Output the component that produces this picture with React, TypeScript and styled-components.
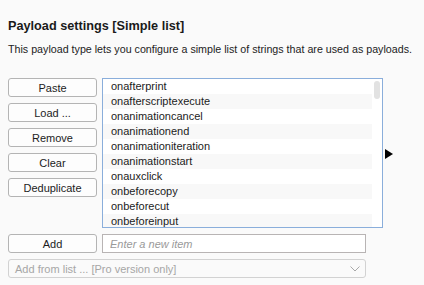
import React from 'react'
import styled, { createGlobalStyle } from 'styled-components'

const FONT = `"Liberation Sans", Arial, sans-serif`

const GlobalStyle = createGlobalStyle`
  html, body {
    margin: 0;
    padding: 0;
    background: #fafafa;
  }
  body {
    font-family: ${FONT};
    color: #1c1c1c;
  }
`

const Panel = styled.div`
  display: flex;
  flex-direction: column;
  padding: 17px 8px 0 8px;
  width: 424px;
  height: 285px;
  box-sizing: border-box;
`

const Title = styled.h2`
  margin: 0;
  font-size: 12.7px;
  font-weight: 700;
  line-height: 18px;
  color: #1a1a1a;
`

const Description = styled.p`
  margin: 6px 0 0 0;
  font-size: 10.7px;
  line-height: 16px;
  white-space: nowrap;
  color: #222;
`

const Main = styled.div`
  display: flex;
  align-items: center;
  margin-top: 21px;
`

const ButtonColumn = styled.div`
  display: flex;
  flex-direction: column;
  gap: 6px;
  align-self: flex-start;
`

const Button = styled.button`
  width: 89px;
  height: 19px;
  padding: 0;
  box-sizing: border-box;
  background: #fdfdfd;
  border: 1px solid #b4b4b4;
  border-radius: 3px;
  font-family: ${FONT};
  font-size: 11px;
  color: #1c1c1c;
  cursor: pointer;
`

const ListBox = styled.div`
  display: flex;
  margin-left: 5px;
  width: 281px;
  height: 150px;
  box-sizing: border-box;
  border: 1px solid #8aaedb;
  background: #fff;
  overflow: hidden;
`

const Rows = styled.div`
  flex: 1;
  display: flex;
  flex-direction: column;
`

const Row = styled.div<{ $odd: boolean }>`
  flex: none;
  height: 15px;
  line-height: 15px;
  padding-left: 8px;
  font-size: 11px;
  white-space: nowrap;
  overflow: hidden;
  color: #1c1c1c;
  background: ${({ $odd }) => ($odd ? '#f8f8f8' : '#fff')};
`

const ScrollTrack = styled.div`
  width: 10px;
  padding: 2px 2px 0 2px;
  box-sizing: border-box;
`

const ScrollThumb = styled.div`
  height: 18px;
  border-radius: 3px;
  background: #e2e2e2;
`

const Arrow = styled.svg`
  margin-left: 2px;
  margin-top: 1px;
`

const FieldRow = styled.div`
  display: flex;
  gap: 5px;
  margin-top: 6px;
`

const TextInput = styled.input`
  width: 264px;
  height: 19px;
  box-sizing: border-box;
  border: 1px solid #b8b4b4;
  border-radius: 0;
  background: #fff;
  padding: 0 7px;
  font-family: ${FONT};
  font-size: 11px;
  line-height: 17px;
  outline: none;
  &::placeholder {
    color: #9a9a9a;
    font-style: italic;
  }
`

const Select = styled.div`
  display: flex;
  align-items: center;
  justify-content: space-between;
  margin-top: 6px;
  width: 358px;
  height: 19px;
  box-sizing: border-box;
  border: 1px solid #d2d2d2;
  border-radius: 3px;
  background: #fafafa;
  padding: 0 5px 0 6px;
  font-size: 11px;
  color: #a6a6a6;
`

const payloads = [
  'onafterprint',
  'onafterscriptexecute',
  'onanimationcancel',
  'onanimationend',
  'onanimationiteration',
  'onanimationstart',
  'onauxclick',
  'onbeforecopy',
  'onbeforecut',
  'onbeforeinput',
  'onbeforepaste',
]

const actions = ['Paste', 'Load ...', 'Remove', 'Clear', 'Deduplicate']

export default function App() {
  return (
    <>
      <GlobalStyle />
      <Panel>
        <Title>Payload settings [Simple list]</Title>
        <Description>
          This payload type lets you configure a simple list of strings that are used as payloads.
        </Description>

        <Main>
          <ButtonColumn>
            {actions.map((a) => (
              <Button key={a}>{a}</Button>
            ))}
          </ButtonColumn>
          <ListBox>
            <Rows>
              {payloads.map((p, i) => (
                <Row key={p} $odd={i % 2 === 1}>
                  {p}
                </Row>
              ))}
            </Rows>
            <ScrollTrack>
              <ScrollThumb />
            </ScrollTrack>
          </ListBox>
          <Arrow width="9" height="10" viewBox="0 0 9 10">
            <path d="M0 0 L8 5 L0 10 Z" fill="#000" />
          </Arrow>
        </Main>

        <FieldRow>
          <Button>Add</Button>
          <TextInput placeholder="Enter a new item" />
        </FieldRow>

        <Select>
          <span>Add from list ... [Pro version only]</span>
          <svg width="10" height="6" viewBox="0 0 10 6">
            <path d="M0.5 0.5 L5 5 L9.5 0.5" fill="none" stroke="#a8a8a8" strokeWidth="1" />
          </svg>
        </Select>
      </Panel>
    </>
  )
}
